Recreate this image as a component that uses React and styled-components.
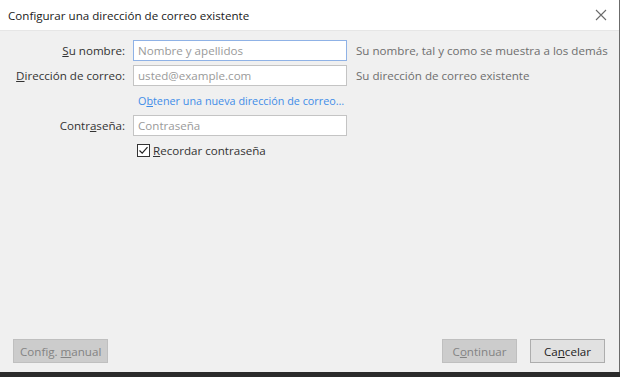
import React from "react";
import styled, { createGlobalStyle } from "styled-components";

const GlobalStyle = createGlobalStyle`
  html, body {
    margin: 0;
    padding: 0;
    background: #2b2b2b;
  }
  body {
    font-family: "Open Sans", "Noto Sans", sans-serif;
    font-size: 11.6px;
  }
`;

const Page = styled.div`
  width: 620px;
  height: 377px;
  display: flex;
  flex-direction: column;
  background: #2b2b2b;
  overflow: hidden;
`;

const Dialog = styled.div`
  height: 372px;
  display: flex;
  flex-direction: column;
  background: #f0f0f0;
  border-right: 1px solid #6b6b6b;
  box-sizing: border-box;
`;

const TitleBar = styled.div`
  height: 31px;
  flex: none;
  display: flex;
  align-items: center;
  justify-content: space-between;
  padding: 0 12px 0 8px;
  background: #ffffff;
  border-bottom: 1px solid #e6e6e6;
  box-sizing: border-box;
`;

const Title = styled.span`
  font-size: 11.6px;
  color: #1a1a1a;
`;

const Body = styled.div`
  flex: 1;
  padding-top: 9px;
`;

const Form = styled.div`
  display: grid;
  grid-template-columns: 125px 214px auto;
  grid-auto-rows: 21px;
  column-gap: 8px;
  row-gap: 4px;
  align-items: center;
`;

const Label = styled.label`
  justify-self: end;
  color: #333;
  white-space: nowrap;
`;

const Input = styled.input`
  grid-column: 2;
  height: 21px;
  box-sizing: border-box;
  margin: 0;
  padding: 0 4px;
  border: 1px solid ${(p) => (p.$focused ? "#8fb2e6" : "#c4c4c4")};
  background: #fff;
  font-family: inherit;
  font-size: 11.6px;
  color: #333;
  outline: none;
  &::placeholder {
    color: #9a9a9a;
  }
`;

const Hint = styled.span`
  margin-left: 1px;
  color: #6e6e6e;
  white-space: nowrap;
`;

const Link = styled.a`
  grid-column: 2 / 4;
  padding-left: 5px;
  font-size: 10.8px;
  color: #3f8de8;
  text-decoration: none;
  white-space: nowrap;
  cursor: pointer;
`;

const CheckRow = styled.label`
  grid-column: 2 / 4;
  display: flex;
  align-items: center;
  gap: 3px;
  padding-left: 4px;
  color: #333;
`;

const Box = styled.span`
  width: 13px;
  height: 13px;
  box-sizing: border-box;
  border: 1px solid #333;
  background: #fff;
  display: flex;
  align-items: center;
  justify-content: center;
`;

const Footer = styled.div`
  flex: none;
  display: flex;
  align-items: center;
  padding: 0 14px 9px 13px;
  gap: 13px;
`;

const Spacer = styled.div`
  flex: 1;
`;

const Button = styled.button`
  height: 24px;
  min-width: 75px;
  padding: 0 6px;
  box-sizing: border-box;
  font-family: inherit;
  font-size: 11.6px;
  border: 1px solid ${(p) => (p.disabled ? "#bfbfbf" : "#adadad")};
  background: ${(p) => (p.disabled ? "#cccccc" : "#e1e1e1")};
  color: ${(p) => (p.disabled ? "#838383" : "#222")};
`;

const Key = styled.u`
  text-decoration: underline;
`;

const CloseIcon = () => (
  <svg width="12" height="12" viewBox="0 0 12 12">
    <path d="M1 1 L11 11 M11 1 L1 11" stroke="#6a6a6a" strokeWidth="1.1" fill="none" />
  </svg>
);

const CheckIcon = () => (
  <svg width="11" height="11" viewBox="0 0 11 11">
    <path d="M1.5 5.5 L4.2 8.2 L9.5 2.2" stroke="#222" strokeWidth="1.2" fill="none" />
  </svg>
);

export default function App() {
  return (
    <>
      <GlobalStyle />
      <Page>
        <Dialog>
          <TitleBar>
            <Title>Configurar una dirección de correo existente</Title>
            <CloseIcon />
          </TitleBar>
          <Body>
            <Form>
              <Label>
                <Key>S</Key>u nombre:
              </Label>
              <Input $focused placeholder="Nombre y apellidos" />
              <Hint>Su nombre, tal y como se muestra a los demás</Hint>

              <Label>
                <Key>D</Key>irección de correo:
              </Label>
              <Input placeholder="usted@example.com" />
              <Hint>Su dirección de correo existente</Hint>

              <span />
              <Link>
                O<Key>b</Key>tener una nueva dirección de correo…
              </Link>

              <Label>
                Contr<Key>a</Key>seña:
              </Label>
              <Input type="password" placeholder="Contraseña" />
              <span />

              <span />
              <CheckRow>
                <Box>
                  <CheckIcon />
                </Box>
                <span>
                  <Key>R</Key>ecordar contraseña
                </span>
              </CheckRow>
            </Form>
          </Body>
          <Footer>
            <Button disabled>
              Config. <Key>m</Key>anual
            </Button>
            <Spacer />
            <Button disabled>
              C<Key>o</Key>ntinuar
            </Button>
            <Button>
              Ca<Key>n</Key>celar
            </Button>
          </Footer>
        </Dialog>
      </Page>
    </>
  );
}
